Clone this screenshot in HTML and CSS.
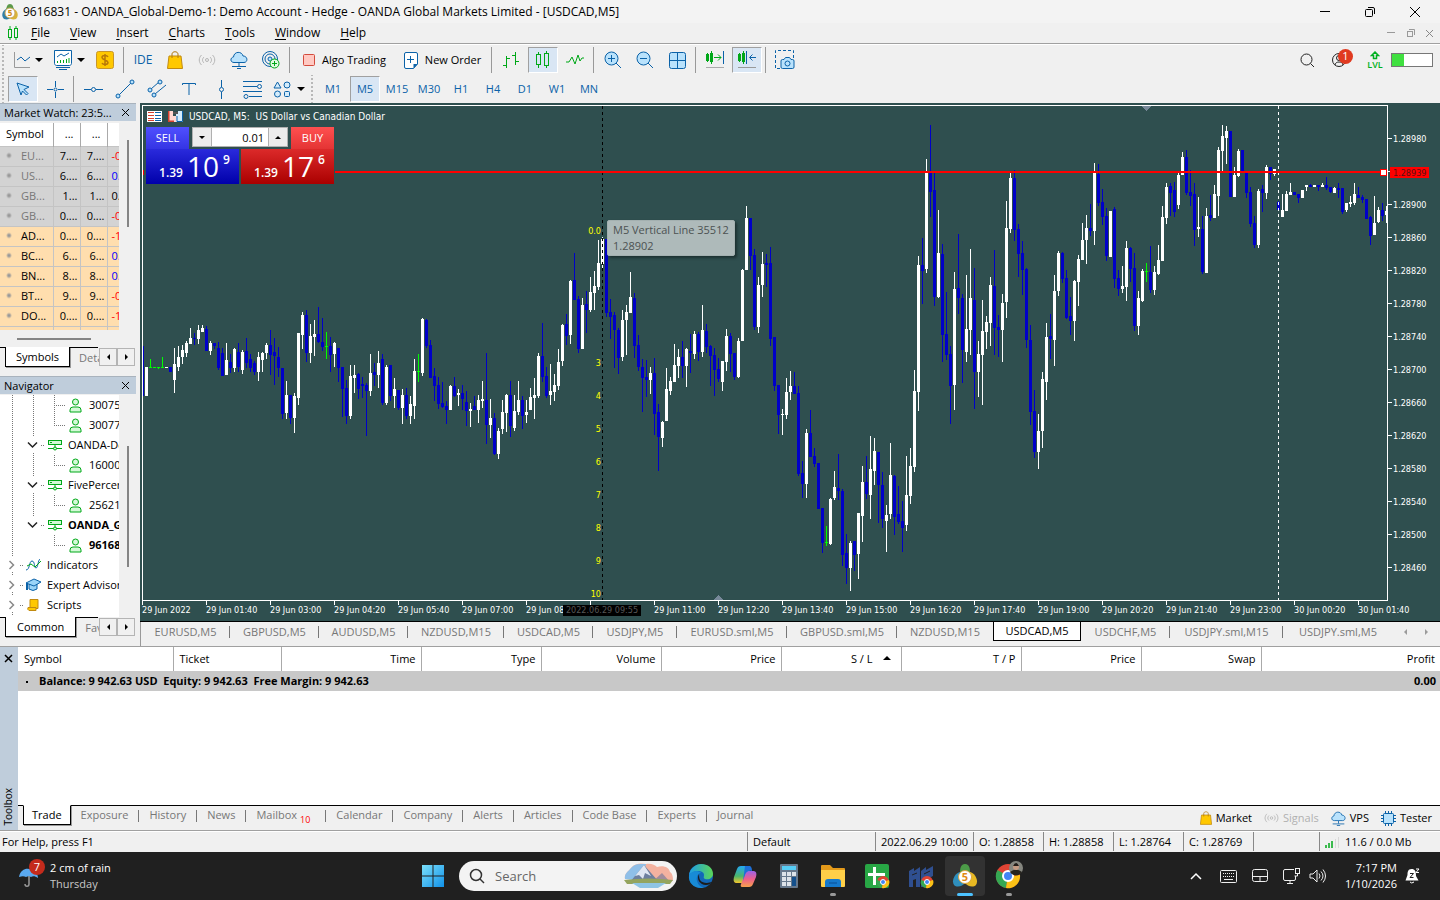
FILE: index.html
```html
<!DOCTYPE html>
<html lang="en">
<head>
<meta charset="utf-8">
<title>9616831 - OANDA_Global-Demo-1: Demo Account - Hedge - OANDA Global Markets Limited - [USDCAD,M5]</title>
<link rel="stylesheet" href="styles.css">
</head>
<body>
<header class="titlebar">
  <svg class="app-icon" width="18" height="18" viewBox="0 0 18 18"><path d="M9 1c3 0 3 3 4 5H5c1-2 1-5 4-5z" fill="#5c9a4a"/><path d="M5 6C1 8 0 13 3 16c3 1 6 0 7-2z" fill="#2f7fa8"/><path d="M13 6c4 2 5 7 2 10-3 1-6 0-8-2z" fill="#d9b33a"/><circle cx="9" cy="10" r="5" fill="#fff" stroke="#c9a65a"/><text x="9" y="13" text-anchor="middle" class="ic-five" fill="#d08a10">5</text></svg>
  <h1 class="window-title">9616831 - OANDA_Global-Demo-1: Demo Account - Hedge - OANDA Global Markets Limited - [USDCAD,M5]</h1>
  <div class="win-controls">
    <button aria-label="Minimize"><svg width="12" height="12" viewBox="0 0 12 12"><path d="M1 5.500h10" stroke="#000" fill="none"/></svg></button>
    <button aria-label="Restore"><svg width="12" height="12" viewBox="0 0 12 12" fill="none" stroke="#000"><rect x="1.500" y="3.500" width="7" height="7" rx="1"/><path d="M4 1.500h5a1.500 1.500 0 0 1 1.500 1.500v5"/></svg></button>
    <button aria-label="Close"><svg width="12" height="12" viewBox="0 0 12 12" stroke="#000"><path d="M1 1l10 10M11 1L1 11"/></svg></button>
  </div>
</header>
<nav class="menubar">
  <svg width="12" height="14" viewBox="0 0 12 14" fill="none" stroke="#00aa18"><rect x="1.500" y="3.500" width="3" height="8"/><path d="M3 0v3M3 12v2M9 0v2M9 12v2"/><rect x="7.500" y="2.500" width="3" height="9"/></svg>
  <div class="menus"><button><u>F</u>ile</button><button><u>V</u>iew</button><button><u>I</u>nsert</button><button><u>C</u>harts</button><button><u>T</u>ools</button><button><u>W</u>indow</button><button><u>H</u>elp</button></div>
  <div class="mdi-controls">
    <button aria-label="Minimize chart"><svg width="9" height="9" viewBox="0 0 9 9"><path d="M0 3.500h8" stroke="#999"/></svg></button>
    <button aria-label="Restore chart"><svg width="9" height="9" viewBox="0 0 9 9" fill="none" stroke="#999"><rect x="1.500" y="2.500" width="5" height="5"/><path d="M3 .5h5.500v5.500"/></svg></button>
    <button aria-label="Close chart"><svg width="9" height="9" viewBox="0 0 9 9" stroke="#888"><path d="M1 1l7 7M8 1L1 8"/></svg></button>
  </div>
</nav>
<section class="toolbars">
  <div class="toolbar">
    <span class="grip"></span>
    <button class="drop" aria-label="Chart type"><svg width="18" height="18" viewBox="0 0 18 18" fill="none"><path d="M1.500 1v15.500H17" stroke="#9a9a9a"/><path d="M4 9l4-3 4 4 5-4" stroke="#0b62a8"/></svg><i class="caret"></i></button>
    <button class="drop" aria-label="Templates"><svg width="20" height="20" viewBox="0 0 20 20" fill="none"><path d="M1.500.5h17v13c0 1-1 2-2 2h-13c-1 0-2-1-2-2z" fill="#fff" stroke="#0b62a8"/><path d="M3 17.500h14M6 19.500h8" stroke="#0b62a8"/><path d="M4 7l4-3 3 2 5-3" stroke="#0b62a8"/><path d="M4.500 13v-2M7.500 13v-3M10.500 13v-3M13.500 13V9M16 13V8" stroke="#00a818"/></svg><i class="caret"></i></button>
    <button class="tool" aria-label="Quotes"><svg width="18" height="18" viewBox="0 0 18 18"><rect x=".5" y=".5" width="17" height="17" rx="2" fill="#ffc800" stroke="#c8962a"/><path d="M9 3v12M12 6c-1-2-6-2-6 .5S12 9 12 11.500 7 14 6 12" fill="none" stroke="#b8780a" stroke-width="1.500"/></svg></button>
    <i class="sep"></i>
    <button class="tool ide">IDE</button>
    <button class="tool" aria-label="Market"><svg width="16" height="18" viewBox="0 0 16 18"><path d="M2 5h12l1.500 12.500H.5z" fill="#ffc800" stroke="#c18a10"/><path d="M5 7V3c0-3 6-3 6 0v4" fill="none" stroke="#b07a10"/></svg></button>
    <button class="tool" aria-label="Signals"><svg width="18" height="14" viewBox="0 0 18 14" fill="none" stroke="#b5b5b5"><circle cx="9" cy="7" r="1.500"/><path d="M6 4c-2 2-2 4 0 6M12 4c2 2 2 4 0 6M3.500 2c-3 3-3 7 0 10M14.500 2c3 3 3 7 0 10"/></svg></button>
    <button class="tool" aria-label="VPS"><svg width="18" height="18" viewBox="0 0 18 18"><path d="M4 11.500c-4 0-4-5-.5-5.500C4 0 12 0 13 5c5 0 5 6.500 1 6.500z" fill="#b9e2fc" stroke="#0b62a8"/><path d="M9 12v3M2 15.500h14M7 17.500h4" stroke="#0b62a8"/></svg></button>
    <button class="tool" aria-label="Radar"><svg width="18" height="18" viewBox="0 0 18 18" fill="none"><g stroke="#0b62a8"><circle cx="8" cy="8" r="7.500"/><circle cx="8" cy="8" r="5"/><circle cx="8" cy="8" r="2" fill="#b9e2fc"/></g><circle cx="12.500" cy="12.500" r="4.500" fill="#e2fbe2" stroke="#00a818"/><path d="M12.500 10v5M10 12.500h5" stroke="#00a818"/></svg></button>
    <i class="sep"></i>
    <button class="wide algo"><svg width="12" height="12" viewBox="0 0 12 12"><rect x=".5" y=".5" width="11" height="11" rx="1" fill="#ffc9c2" stroke="#d34b3c"/></svg>Algo Trading</button>
    <button class="wide order"><svg width="14" height="17" viewBox="0 0 14 17"><path d="M.5 2q0-1.500 1.500-1.500h10q1.500 0 1.500 1.500v10l-4 4.500H2Q.5 16.500.5 15z" fill="#fff" stroke="#0b62a8"/><path d="M13.500 12l-4 4.500V12z" fill="#0b62a8"/><path d="M6.500 4v7M3 7.500h7" stroke="#0b62a8"/></svg>New Order</button>
    <i class="sep"></i>
    <button class="tool" aria-label="Bar chart"><svg width="18" height="18" viewBox="0 0 18 18"><path d="M1 14.500h3.500M4.500 5v12M4.500 7.500H8M10 4.500h3.500M13.500 1v13M13.500 10.500H17" stroke="#00a818" fill="none"/></svg></button>
    <button class="tool on" aria-label="Candles"><svg width="16" height="18" viewBox="0 0 16 18" fill="none" stroke="#00a818"><rect x="1.500" y="3.500" width="4" height="10"/><path d="M3.500 1v2M3.500 14v3M11.500 0v2M11.500 15v2"/><rect x="9.500" y="2.500" width="4" height="12"/></svg></button>
    <button class="tool" aria-label="Line chart"><svg width="18" height="14" viewBox="0 0 18 14"><path d="M0 9h3l3-5 3 7 3-9 2 6 2-3h2" stroke="#00a818" fill="none"/></svg></button>
    <i class="sep"></i>
    <button class="tool" aria-label="Zoom in"><svg width="18" height="18" viewBox="0 0 18 18"><circle cx="7.500" cy="7.500" r="6.500" fill="#b9e2fc" stroke="#0b62a8"/><path d="M4 7.500h7M7.500 4v7M12 12l5 5" stroke="#0b62a8"/></svg></button>
    <button class="tool" aria-label="Zoom out"><svg width="18" height="18" viewBox="0 0 18 18"><circle cx="7.500" cy="7.500" r="6.500" fill="#b9e2fc" stroke="#0b62a8"/><path d="M4 7.500h7M12 12l5 5" stroke="#0b62a8"/></svg></button>
    <button class="tool" aria-label="Tile windows"><svg width="17" height="17" viewBox="0 0 17 17"><rect x=".5" y=".5" width="16" height="16" rx="2" fill="#b9e2fc" stroke="#0b62a8"/><path d="M8.500 1v15M1 8.500h15" stroke="#0b62a8"/></svg></button>
    <i class="sep"></i>
    <button class="tool" aria-label="Scroll to end"><svg width="20" height="18" viewBox="0 0 20 18" fill="none"><g stroke="#00a818"><rect x="1.500" y="3.500" width="2" height="6"/><rect x="5.500" y="2.500" width="2" height="8"/><path d="M2.500 2v9M6.500 0v13M9 6.500h7M13 3.500l3 3-3 3"/></g><path d="M18.500 0v13" stroke="#0b62a8"/><path d="M1 16.500h18" stroke="#aaa"/></svg></button>
    <button class="tool on" aria-label="Chart shift"><svg width="20" height="18" viewBox="0 0 20 18" fill="none"><g stroke="#00a818"><rect x="1.500" y="3.500" width="2" height="6"/><rect x="5.500" y="2.500" width="2" height="8"/><path d="M2.500 2v9M6.500 0v13"/></g><path d="M9.500 0v13M19 6.500h-6M15.500 3.500l-3 3 3 3" stroke="#0b62a8"/><path d="M1 16.500h18" stroke="#999"/></svg></button>
    <i class="sep"></i>
    <button class="tool" aria-label="Screenshot"><svg width="20" height="20" viewBox="0 0 20 20" fill="none" stroke="#0b62a8"><path d="M5 18.500H.5V.5h18V8" stroke-dasharray="3 2"/><path d="M6 11q0-1.500 1.500-1.500h1.500l1.500-2h4l1.500 2h1.500q1.500 0 1.500 1.500v6q0 1.500-1.500 1.500h-10Q6 18.500 6 17z" fill="#b9e2fc"/><circle cx="12.500" cy="13.500" r="2.500"/></svg></button>
    <div class="toolbar-right">
      <button aria-label="Search"><svg width="15" height="15" viewBox="0 0 15 15" fill="none" stroke="#222"><circle cx="6.500" cy="6.500" r="5.500"/><path d="M10.500 10.500L14 14"/></svg></button>
      <button class="profile" aria-label="Profile"><svg width="14" height="14" viewBox="0 0 14 14" fill="none" stroke="#222"><circle cx="7" cy="7" r="6.500"/><circle cx="7" cy="5" r="2.500"/><path d="M3 12c0-4 8-4 8 0"/></svg><span class="badge">1</span></button>
      <button class="lvl" aria-label="Level"><svg width="10" height="9" viewBox="0 0 10 9" fill="none" stroke="#00b020" stroke-width="1.500"><path d="M5 1L1.500 4.500h2v3h3v-3h2z"/></svg><span>LVL</span></button>
      <span class="meter"><i></i></span>
    </div>
  </div>
  <div class="toolbar second">
    <span class="grip"></span>
    <button class="tool on" aria-label="Cursor"><svg width="16" height="16" viewBox="0 0 16 16"><path d="M2 2l12 4-5 2.500 4 4-1.500 1.500-4-4L6 14z" fill="#b9e2fc" stroke="#0b62a8"/></svg></button>
    <button class="tool" aria-label="Crosshair"><svg width="17" height="17" viewBox="0 0 17 17" fill="none" stroke="#0b62a8"><path d="M8.500 0v6M8.500 11v6M0 8.500h6M11 8.500h6"/><circle cx="8.500" cy="8.500" r="1.500"/></svg></button>
    <i class="sep"></i>
    <button class="tool" aria-label="Horizontal line"><svg width="19" height="9" viewBox="0 0 19 9" fill="none" stroke="#0b62a8"><path d="M0 4.500h7M12 4.500h7"/><circle cx="9.500" cy="4.500" r="2"/></svg></button>
    <button class="tool" aria-label="Trend line"><svg width="20" height="20" viewBox="0 0 20 20" stroke="#0b62a8"><path d="M4 16L16 4"/><g fill="#b9e2fc"><circle cx="3" cy="17" r="2"/><circle cx="17" cy="3" r="2"/></g></svg></button>
    <button class="tool" aria-label="Channel"><svg width="20" height="20" viewBox="0 0 20 20" stroke="#0b62a8"><path d="M4 10l8-7M8 15L19 6"/><g fill="#b9e2fc"><circle cx="3" cy="11" r="2"/><circle cx="13" cy="3" r="2"/><circle cx="7" cy="16" r="2"/></g></svg></button>
    <button class="tool" aria-label="Text"><svg width="14" height="14" viewBox="0 0 14 14"><path d="M.5 3V1.500h13V3M7 1.500V13" stroke="#0b62a8" fill="none"/></svg></button>
    <button class="tool" aria-label="Vertical line"><svg width="9" height="19" viewBox="0 0 9 19" fill="none" stroke="#0b62a8"><path d="M4.500 0v7M4.500 12v7"/><circle cx="4.500" cy="9.500" r="2"/></svg></button>
    <button class="tool" aria-label="Fibonacci"><svg width="20" height="19" viewBox="0 0 20 19" fill="none" stroke="#0b62a8"><path d="M0 1.500h19M0 6.500h14M0 11.500h19M6 16.500h13"/><circle cx="16.500" cy="6.500" r="2"/><circle cx="3" cy="16.500" r="2"/></svg></button>
    <button class="drop shapes" aria-label="Objects"><svg width="19" height="19" viewBox="0 0 19 19" fill="#d5ecfb" stroke="#0b62a8"><path d="M4.500 2L8 8H1z"/><circle cx="14" cy="5" r="3"/><circle cx="4.500" cy="14" r="3"/><rect x="11.500" y="11.500" width="5" height="5" rx="1"/></svg><i class="caret"></i></button>
    <span class="grip mid"></span>
    <button class="tool tf">M1</button><button class="tool tf on">M5</button><button class="tool tf">M15</button><button class="tool tf">M30</button><button class="tool tf">H1</button><button class="tool tf">H4</button><button class="tool tf">D1</button><button class="tool tf">W1</button><button class="tool tf">MN</button>
  </div>
</section>
<main class="workspace">
  <aside class="sidebar">
    <section class="pane watch">
      <h2 class="pane-head">Market Watch: 23:5...<button aria-label="Close Market Watch"><svg width="9" height="9" viewBox="0 0 9 9" stroke="#000"><path d="M1 1l7 7M8 1L1 8"/></svg></button></h2>
      <div class="watch-body">
        <div class="watch-clip">
          <table class="quotes">
            <colgroup><col class="c-sym"><col class="c-num"><col class="c-num"><col class="c-num"></colgroup>
            <thead><tr><th>Symbol</th><th>...</th><th>...</th><th></th></tr></thead>
            <tbody>
              <tr class="off"><td>EU...</td><td>7....</td><td>7....</td><td class="neg">-0.</td></tr>
              <tr class="off"><td>US...</td><td>6....</td><td>6....</td><td class="pos">0.1</td></tr>
              <tr class="off"><td>GB...</td><td>1...</td><td>1...</td><td>0.0</td></tr>
              <tr class="off"><td>GB...</td><td>0....</td><td>0....</td><td class="neg">-0.</td></tr>
              <tr><td>AD...</td><td>0....</td><td>0....</td><td class="neg">-1.</td></tr>
              <tr><td>BC...</td><td>6...</td><td>6...</td><td class="pos">0.1</td></tr>
              <tr><td>BN...</td><td>8...</td><td>8...</td><td class="pos">0.1</td></tr>
              <tr><td>BT...</td><td>9...</td><td>9...</td><td class="neg">-0.</td></tr>
              <tr><td>DO...</td><td>0....</td><td>0....</td><td class="neg">-1.</td></tr>
              <tr><td></td><td></td><td></td><td></td></tr>
            </tbody>
          </table>
        </div>
        <i class="vthumb"></i>
      </div>
      <i class="hthumb"></i>
      <div class="side-tabs"><button class="tab-on">Symbols</button><button class="tab-off">Details</button><span class="arrows"><button aria-label="Previous tab"><i class="tri-l"></i></button><button aria-label="Next tab"><i class="tri-r"></i></button></span></div>
    </section>
    <section class="pane">
      <h2 class="pane-head">Navigator<button aria-label="Close Navigator"><svg width="9" height="9" viewBox="0 0 9 9" stroke="#000"><path d="M1 1l7 7M8 1L1 8"/></svg></button></h2>
      <div class="nav-body">
        <div class="tree" id="tree">
          <svg class="tree-lines" width="70" height="220" viewBox="0 0 70 220" fill="none" stroke="#777" stroke-dasharray="1 1"><path d="M12.500 0v161M12.500 177v3M12.500 197v3M12.500 217v3M33.500 0v42M33.500 58v24M33.500 98v24M54.500 0v30M54 10.500h11M54 30.500h11M41 50.500h4M54.500 60v10M54 70.500h11M41 90.500h4M54.500 100v10M54 110.500h11M41 130.500h4M54.500 140v10M54 150.500h11M20 170.500h3M20 190.500h3M20 210.500h3"/></svg>
        </div>
        <i class="vthumb low"></i>
      </div>
      <div class="side-tabs nav-tabs"><button class="tab-on">Common</button><button class="tab-off">Favorites</button><span class="arrows"><button aria-label="Previous tab"><i class="tri-l"></i></button><button aria-label="Next tab"><i class="tri-r"></i></button></span></div>
    </section>
  </aside>
  <section class="chart-col">
    <div class="chart">
      <svg id="plot" class="plot" viewBox="140 103 1300 518"></svg>
      <div class="chart-title">
        <svg width="15" height="11" viewBox="0 0 15 11"><rect width="15" height="11" fill="#fff"/><path d="M1 1.500h6M1 4.500h6M1 7.500h6M1 9.500h6" stroke="#d5402e"/><path d="M8 1.500h6M8 4.500h6M8 7.500h6M8 9.500h6" stroke="#0b62a8"/></svg>
        <svg width="15" height="11" viewBox="0 0 15 11"><path d="M0 0h5v5h5v6H0z" fill="#ffd9d2"/><path d="M.5 0v10.500H6" fill="none" stroke="#d5402e" stroke-width="2"/><path d="M15 0h-5v3H8v8h7z" fill="#d4ecfb"/><path d="M14.500 0v10.500H9V5" fill="none" stroke="#0b62a8"/><rect x="5" y="1" width="5" height="2" fill="#555"/></svg>
        <span>USDCAD, M5:&nbsp; US Dollar vs Canadian Dollar</span>
      </div>
      <div class="deal">
        <button class="deal-btn sell"><span class="side">SELL</span><span class="price"><b>1.39</b><em>10</em><sup>9</sup></span></button>
        <button class="deal-btn buy"><span class="side">BUY</span><span class="price"><b>1.39</b><em>17</em><sup>6</sup></span></button>
        <div class="volume"><button aria-label="Decrease volume"><i class="tri-d"></i></button><input aria-label="Volume" value="0.01"><button aria-label="Increase volume"><i class="tri-u"></i></button></div>
      </div>
      <div class="tooltip">M5 Vertical Line 35512<br>1.28902</div>
    </div>
    <nav class="chart-tabs">
      <button>EURUSD,M5</button><button>GBPUSD,M5</button><button>AUDUSD,M5</button><button class="m15">NZDUSD,M15</button><button>USDCAD,M5</button><button class="narrow">USDJPY,M5</button><button class="sml">EURUSD.sml,M5</button><button class="sml">GBPUSD.sml,M5</button><button class="m15 last">NZDUSD,M15</button><button class="current">USDCAD,M5</button><button>USDCHF,M5</button><button class="sml15">USDJPY.sml,M15</button><button class="sml last">USDJPY.sml,M5</button>
      <span class="tab-scroll"><i class="tri-l"></i><i class="tri-r"></i></span>
    </nav>
  </section>
</main>
<section class="toolbox">
  <div class="strip"><button aria-label="Close Toolbox"><svg width="9" height="9" viewBox="0 0 9 9" stroke="#000" stroke-width="1.500"><path d="M1 1l7 7M8 1L1 8"/></svg></button><span>Toolbox</span></div>
  <div class="toolbox-main">
    <div class="trade-area">
      <table class="trade">
        <colgroup><col class="w155"><col class="w108"><col class="w140"><col class="w120"><col class="w120"><col class="w120"><col class="w120"><col class="w120"><col class="w120"><col class="w120"><col></colgroup>
        <thead><tr><th>Symbol</th><th>Ticket</th><th>Time</th><th>Type</th><th>Volume</th><th>Price</th><th>S / L<i class="tri-u sort"></i></th><th>T / P</th><th>Price</th><th>Swap</th><th>Profit</th></tr></thead>
        <tbody><tr><td colspan="10"><i class="dot"></i>Balance: 9 942.63 USD&nbsp; Equity: 9 942.63&nbsp; Free Margin: 9 942.63</td><td>0.00</td></tr></tbody>
      </table>
    </div>
    <div class="box-tabs">
      <button class="tab-on">Trade</button><button>Exposure</button><button>History</button><button>News</button><button class="mail">Mailbox<small>10</small></button><button>Calendar</button><button>Company</button><button>Alerts</button><button>Articles</button><button>Code Base</button><button>Experts</button><button>Journal</button>
      <div class="services">
        <button><svg width="12" height="14" viewBox="0 0 16 18"><path d="M2 5h12l1.500 12.500H.5z" fill="#ffc800" stroke="#c18a10"/><path d="M5 7V3c0-3 6-3 6 0v4" fill="none" stroke="#b07a10"/></svg>Market</button>
        <button class="dim"><svg width="15" height="12" viewBox="0 0 18 14" fill="none" stroke="#b5b5b5"><circle cx="9" cy="7" r="1.500"/><path d="M6 4c-2 2-2 4 0 6M12 4c2 2 2 4 0 6M3.500 2c-3 3-3 7 0 10M14.500 2c3 3 3 7 0 10"/></svg>Signals</button>
        <button><svg width="15" height="15" viewBox="0 0 18 18"><path d="M4 11.500c-4 0-4-5-.5-5.500C4 0 12 0 13 5c5 0 5 6.500 1 6.500z" fill="#b9e2fc" stroke="#0b62a8"/><path d="M9 12v3M2 15.500h14M7 17.500h4" stroke="#0b62a8"/></svg>VPS</button>
        <button><svg width="15" height="15" viewBox="0 0 15 15" stroke="#0b62a8"><path d="M4.500 0v15M7.500 0v15M10.500 0v15M0 4.500h15M0 7.500h15M0 10.500h15"/><rect x="2.500" y="2.500" width="10" height="10" rx="1" fill="#b9e2fc"/></svg>Tester</button>
      </div>
    </div>
  </div>
</section>
<footer class="status">
  <span class="help">For Help, press F1</span><span class="s-profile">Default</span><span class="s-date">2022.06.29 10:00</span><span class="s-val">O: 1.28858</span><span class="s-val">H: 1.28858</span><span class="s-val">L: 1.28764</span><span class="s-val">C: 1.28769</span><span class="s-gap"></span><span class="s-net"><svg width="14" height="12" viewBox="0 0 14 12"><path d="M1 12V9M4 12V7M7 12V5" stroke="#00a818" stroke-width="1.500"/><path d="M10.500 12V3M13.500 12V1" stroke="#d8d8d8"/></svg>11.6 / 0.0 Mb</span>
</footer>
<footer class="taskbar">
  <button class="weather"><span class="umbrella"><svg width="24" height="24" viewBox="0 0 24 24"><path d="M1 13C2 6 8 4 11 5c5 0 9 4 9 9-3-2-5-2-7-1-2-1-3-1-5 0-2-1-4-1-7 0z" fill="#5aa9f0"/><path d="M11 12v8c0 3-4 3-4 0" stroke="#999" stroke-width="1.500" fill="none"/></svg><b>7</b></span><span class="weather-text">2 cm of rain<small>Thursday</small></span></button>
  <div class="apps">
    <button class="app" aria-label="Start"><svg width="24" height="24" viewBox="0 0 24 24"><defs><linearGradient id="win" x2="1" y2="1"><stop stop-color="#7be0fb"/><stop offset="1" stop-color="#1191e8"/></linearGradient></defs><path d="M1 1h10.500v10.500H1zM12.500 1H23v10.500H12.500zM1 12.500h10.500V23H1zM12.500 12.500H23V23H12.500z" fill="url(#win)"/></svg></button>
    <label class="search"><svg width="16" height="16" viewBox="0 0 16 16" fill="none" stroke="#333" stroke-width="1.500"><circle cx="7" cy="7" r="5.500"/><path d="M11 11l4 4"/></svg><input placeholder="Search" aria-label="Search"><svg width="50" height="26" viewBox="0 0 50 26"><path d="M1 16C0 10 5 8 7 5c4-5 10-5 15-4 5-1 9 1 11 3 6-2 12 0 13 5 3 2 3 6 3 9z" fill="#f3b2a0"/><path d="M1 16C0 10 5 8 7 5c4-5 10-4 15-4l-4 17z" fill="#8fbfe8"/><path d="M6 19L20 2l15 17z" fill="#6d7f9e"/><path d="M20 2l-9 11 4-1 4 4 2-6 6 3z" fill="#dfe6f2"/><path d="M28 19l10-9 8 9z" fill="#a08c9c"/><path d="M0 17q25-3 49 0l-3 4H3z" fill="#94a45e"/><path d="M8 20h34l-8 5H16z" fill="#8ec4e4"/></svg></label>
    <button class="app" aria-label="Edge"><svg width="26" height="26" viewBox="0 0 26 26"><defs><linearGradient id="edge" x2="1"><stop stop-color="#1e9de8"/><stop offset="1" stop-color="#5bd657"/></linearGradient></defs><circle cx="13" cy="13" r="12" fill="#1267b8"/><path d="M1 12C2 5 8 1 13 1c7 0 12 4 12 10 0 4-4 6-8 5-2-1-1-2-1-4 0-3-3-4-6-4-4 0-7 2-9 4z" fill="url(#edge)"/><path d="M11 11c-3 5 1 11 7 11 3 0 5-2 6-3-3 1-9 2-12-2-1-2-1-4-1-6z" fill="#1c1c1c"/><path d="M1 12c4-6 11-4 12-2-3 0-5 4-4 8 1 4 4 6 7 7C6 26 0 20 1 12z" fill="#188bd6"/></svg></button>
    <button class="app" aria-label="Copilot"><svg width="24" height="24" viewBox="0 0 24 24"><defs><linearGradient id="co1" y2="1" x2="0"><stop stop-color="#24a8f4"/><stop offset=".6" stop-color="#4bb66b"/><stop offset="1" stop-color="#f5c52b"/></linearGradient><linearGradient id="co2" y2="1" x2="0"><stop stop-color="#9b62e8"/><stop offset=".5" stop-color="#ed5f8c"/><stop offset="1" stop-color="#f6a14b"/></linearGradient></defs><path d="M8 2h8q2 0 1 3l-4 11q-1 3-4 3H4c-3 0-4-2-3-6l3-8q1-3 4-3z" fill="url(#co1)"/><path d="M16 7h4c3 0 4 2 3 6l-3 7q-1 3-4 3H9q-2 0-1-3l4-10q1-3 4-3z" fill="url(#co2)"/><path d="M12 2h4q3 0 3 5c-4-1-6 1-7 4l-2 6z" fill="#1d6fd8"/></svg></button>
    <button class="app" aria-label="Calculator"><svg width="20" height="26" viewBox="0 0 20 26"><rect x="1" y="1" width="18" height="24" rx="1" fill="#66788c"/><rect x="3" y="3" width="14" height="4" fill="#56cdf6"/><g fill="#dde3e9"><path d="M3 9h4v4H3zM8 9h4v4H8zM13 9h4v4h-4zM3 14h4v4H3zM8 14h4v4H8zM3 19h4v4H3zM8 19h4v4H8z"/></g><path d="M13 14h4v9h-4z" fill="#14508c"/></svg></button>
    <button class="app dotted" aria-label="Explorer"><svg width="26" height="24" viewBox="0 0 26 24"><path d="M1 2q0-1 1-1h8l3 3h11q1 0 1 1v17H1z" fill="#e49a1a"/><path d="M1 6h24v16q0 1-1 1H2q-1 0-1-1z" fill="#ffcf48"/><path d="M5 23v-5q0-3 3-3h10q3 0 3 3v5z" fill="#1579cc"/><path d="M9 19h8" stroke="#0b4f94"/></svg></button>
    <button class="app" aria-label="Sheets"><svg width="26" height="26" viewBox="0 0 26 26"><rect x="1" y="1" width="24" height="24" rx="2" fill="#28a745"/><path d="M9 4h3v6h9v3h-9v9H9v-9H4v-3h5z" fill="#fff"/><circle cx="19" cy="19" r="6" fill="#e04434"/><path d="M19 19L13 17a6 6 0 0 0 5 8z" fill="#35a853"/><path d="M19 19l6-2a6 6 0 0 1-7 8z" fill="#fbc116"/><circle cx="19" cy="19" r="2.500" fill="#4285f4" stroke="#fff"/></svg></button>
    <button class="app" aria-label="Factory app"><svg width="26" height="26" viewBox="0 0 26 26"><path d="M1 8l5-3v3l6-4v20H8v-8l-3 1v7H1zM13 8l5-4v3l7-4v10l-6 3v8h-6z" fill="#2f4f90"/><path d="M4 12l5-2M16 11l6-3" stroke="#202020"/><circle cx="19" cy="19" r="6" fill="#e04434"/><path d="M19 19L13 17a6 6 0 0 0 5 8z" fill="#35a853"/><path d="M19 19l6-2a6 6 0 0 1-7 8z" fill="#fbc116"/><circle cx="19" cy="19" r="2.500" fill="#4285f4" stroke="#fff"/></svg></button>
    <button class="app active" aria-label="MetaTrader 5"><svg width="26" height="26" viewBox="0 0 26 26"><path d="M13 1c5 0 5 6 5 9H8c0-3 0-9 5-9z" fill="#4c9b48"/><path d="M8 9c-5 1-9 9-6 13 3 3 9 1 11-2z" fill="#2f8fbd"/><path d="M18 9c5 1 9 9 6 13-3 3-9 1-11-2z" fill="#e8b923"/><circle cx="13" cy="14" r="6.500" fill="#fff" stroke="#d9a441"/><text x="13" y="18" text-anchor="middle" class="ic-five big" fill="#e28a12">5</text></svg></button>
    <button class="app dotted" aria-label="Chrome"><svg width="28" height="30" viewBox="0 0 28 30"><circle cx="13" cy="15" r="12" fill="#e04434"/><path d="M13 15L2.500 9A12 12 0 0 0 11 27z" fill="#35a853"/><path d="M13 15l12-1a12 12 0 0 1-14 13z" fill="#fbc116"/><circle cx="13" cy="15" r="5" fill="#4285f4" stroke="#fff" stroke-width="2"/><circle cx="21" cy="7" r="7" fill="#85867f"/><path d="M15 11q6-5 12 0c-2 4-9 5-12 0z" fill="#26241f"/><circle cx="21" cy="6" r="3" fill="#c49a82"/><path d="M18 5q3-6 6 0z" fill="#221c18"/></svg></button>
  </div>
  <div class="tray">
    <button aria-label="Hidden icons"><svg width="12" height="8" viewBox="0 0 12 8" fill="none" stroke="#fff" stroke-width="1.500"><path d="M1 7l5-5 5 5"/></svg></button>
    <button aria-label="Keyboard"><svg width="17" height="13" viewBox="0 0 17 13" fill="none" stroke="#eee"><rect x=".5" y=".5" width="16" height="12" rx="1"/><path d="M3 3.500h11M3 6.500h11" stroke-dasharray="1 1"/><path d="M4 9.500h9"/></svg></button>
    <button aria-label="Touchpad"><svg width="16" height="14" viewBox="0 0 16 14" fill="none" stroke="#eee"><rect x=".5" y=".5" width="15" height="12" rx="2"/><path d="M0 7.500h16M8 8v5"/></svg></button>
    <button aria-label="Network"><svg width="18" height="18" viewBox="0 0 18 18" fill="none" stroke="#eee"><path d="M11 2.500H2Q.5 2.500.5 4v8q0 1.500 1.500 1.500h9q1.500 0 1.500-1.500V9M4 16.500h6M7 14v2"/><rect x="12.500" y="1.500" width="4" height="5"/><path d="M14.500 7v2h-3"/></svg></button>
    <button class="sound" aria-label="Sound"><svg width="17" height="16" viewBox="0 0 17 16" fill="none" stroke="#eee"><path d="M1 6v4h3l4 4V2L4 6zM10 5.500q2 2.500 0 5M12 3.500q4 4.500 0 9M14 1.500q5 6.500 0 13"/></svg></button>
    <time>7:17 PM<br>1/10/2026</time>
    <button aria-label="Notifications"><svg width="15" height="17" viewBox="0 0 15 17"><path d="M6.500 1C3 1 2.500 4 2.500 7L.5 12.500h13L11 8C11 3 10 1 6.500 1z" fill="#fff"/><path d="M5 14q1.500 2 4 0" stroke="#fff" fill="none"/><path d="M5 5.500h3.500L5 9.500h3.500" stroke="#202020" fill="none"/><path d="M11 1h3l-3 3.500h3" stroke="#fff" fill="none"/></svg></button>
  </div>
</footer>
<script src="app.js"></script>
</body>
</html>
```
FILE: styles.css
```css
* { box-sizing: border-box; }
body { margin: 0; min-height: 100vh; display: flex; flex-direction: column; background: #f0f0f0; color: #000; font: 11px/16px "Open Sans", "Noto Sans", sans-serif; overflow-x: hidden; }
button { margin: 0; padding: 0; border: 0; background: none; color: inherit; font: inherit; display: inline-flex; align-items: center; justify-content: center; white-space: nowrap; }
h1, h2 { margin: 0; font: inherit; }
svg { display: block; flex: none; }
i { display: block; flex: none; }

.titlebar { display: flex; align-items: center; height: 23px; padding-left: 1px; background: #f3f3f3; }
.window-title { margin-left: 4px; flex: 1; font-size: 12px; white-space: nowrap; overflow: hidden; }
.ic-five { font: bold 8px "Open Sans", sans-serif; }
.ic-five.big { font-size: 11px; }
.win-controls { display: flex; padding-right: 3px; }
.win-controls button { width: 45px; height: 20px; }

.menubar { display: flex; align-items: center; height: 21px; padding-left: 7px; border-bottom: 1px solid #a0a0a0; }
.menus { display: flex; gap: 20px; margin-left: 12px; font-size: 12px; }
.menus u { text-underline-offset: 2px; }
.mdi-controls { display: flex; margin-left: auto; padding-right: 1px; }
.mdi-controls button { width: 19px; height: 16px; }

.toolbars { border-top: 1px solid #fff; }
.toolbar { display: flex; align-items: center; height: 30px; }
.toolbar.second { height: 28px; }
.grip { width: 7px; align-self: stretch; flex: none; background: radial-gradient(circle, #b8b8b8 1px, transparent 1px) 1px 2px / 4px 4px repeat-y; }
.grip.mid { width: 8px; }
.tool { width: 32px; height: 28px; flex: none; }
.tool.on { width: 30px; margin: 0 1px; height: 26px; background: #d9e6f4; border: 1px solid; border-color: #a0a0a0 #fff #fff #a0a0a0; }
.tool.tf, .tool.ide { color: #0b62a8; }
.tool.ide { font-size: 12px; }
.drop { width: 41px; gap: 4px; }
.shapes { width: 40px; gap: 5px; }
.caret { border: 4px solid transparent; border-top-color: #000; border-bottom: 0; }
.sep { width: 1px; height: 26px; margin: 0 3px 0 2px; background: #999; }
.wide { gap: 7px; flex: none; }
.algo { width: 103px; }
.order { width: 93px; }
.toolbar-right { display: flex; align-items: center; margin-left: auto; padding-right: 7px; }
.toolbar-right > button { width: 32px; height: 28px; }
.toolbar-right .profile { position: relative; }
.badge { position: absolute; right: 2px; top: 3px; width: 15px; height: 15px; border-radius: 8px; background: #e03a20; color: #fff; line-height: 14px; }
.toolbar-right .lvl { flex-direction: column; margin-left: 4px; color: #00b020; font-size: 9px; font-weight: 600; line-height: 9px; }
.meter { width: 42px; height: 14px; border: 1px solid #777; background: #fff; }
.meter i { width: 12px; height: 12px; background: #40e040; }

.workspace { display: flex; border-bottom: 1px solid #a0a0a0; }
.sidebar { width: 140px; flex: none; padding-right: 4px; }
.pane { display: flex; flex-direction: column; }
.watch { margin-bottom: 8px; }
.pane-head { display: flex; align-items: center; justify-content: space-between; height: 18px; padding: 0 6px 0 4px; border-top: 1px solid #a9b3bd; background: #bfcddb; white-space: nowrap; }
.watch-body { display: flex; height: 209px; padding-top: 2px; }
.watch-clip { width: 119px; overflow: hidden; background: #fff; }
.quotes { width: 134px; table-layout: fixed; border-collapse: collapse; }
.c-sym { width: 53px; }
.c-num { width: 27px; }
.quotes th { height: 23px; padding: 0 6px; border-right: 1px solid #aaa; background: #fff; font-weight: normal; text-align: left; }
.quotes th + th { text-align: right; }
.quotes td { height: 20px; padding: 0 2px; border: 1px solid #c4c4c4; border-left: 0; background: #ffdeae; text-align: right; line-height: 14px; white-space: nowrap; overflow: hidden; }
.quotes td:first-child { padding-left: 21px; text-align: left; background-image: radial-gradient(circle at 9px 9px, #999 1px, transparent 3px); }
.quotes td:last-child { padding-left: 4px; text-align: left; }
.quotes .off td { background-color: #d3d3d3; }
.quotes .off td:first-child { color: #777; }
.quotes td.neg { color: #f00; }
.quotes td.pos { color: #00f; }
.vthumb { width: 2px; height: 87px; margin: 17px 0 0 8px; background: #858585; }
.vthumb.low { height: 121px; margin-top: 51px; }
.hthumb { width: 74px; height: 2px; margin: 8px 0 7px 17px; background: #858585; }
.side-tabs { display: flex; height: 21px; position: relative; background: linear-gradient(#000, #000) 0 0 / 98px 1px no-repeat; padding-left: 5px; overflow: hidden; }
.tab-on { background: #fff; border: 1px solid #000; border-top: 0; box-shadow: 1px 1px 0 #999; }
.side-tabs .tab-on { height: 20px; padding: 0 10px; }
.nav-tabs .tab-on { padding: 0 11px; }
.tab-off { color: #777; padding: 0 9px; }
.arrows { display: flex; position: absolute; right: 1px; top: 1px; background: #f0f0f0; }
.arrows button { width: 18px; height: 18px; border: 1px solid #b4b4b4; }
.tri-l { border: 3px solid transparent; border-left: 0; border-right-color: #000; }
.tri-r { border: 3px solid transparent; border-right: 0; border-left-color: #000; }
.tri-d { border: 3px solid transparent; border-bottom: 0; border-top-color: #000; }
.tri-u { border: 3px solid transparent; border-top: 0; border-bottom-color: #000; }
.nav-body { display: flex; padding-top: 1px; }
.tree { position: relative; width: 119px; height: 222px; background: #fff; overflow: hidden; }
.tree-lines { position: absolute; left: 0; top: 0; }
.node { display: flex; align-items: center; height: 20px; position: relative; white-space: nowrap; }
.node .chev { width: 11px; }
.lv1 { padding-left: 6px; }
.lv1 span { margin-left: 5px; }
.lv1 .pic { margin-left: 8px; }
.lv2 { padding-left: 27px; }
.lv2 span { margin-left: 6px; }
.lv2 .pic { margin-left: 10px; }
.lv3 { padding-left: 69px; }
.lv3 span { margin-left: 7px; }
.node.bold { font-weight: bold; }

.chart-col { flex: 1; min-width: 0; }
.chart { position: relative; background: #2f4f4f; border-bottom: 1px solid #000; }
.plot { width: 100%; height: auto; shape-rendering: crispEdges; }
.plot text { font: 9px "DejaVu Sans Condensed", "DejaVu Sans", sans-serif; fill: #fff; }
.plot .level { fill: #ff0; }
.plot .dark { fill: #565656; }
.plot .onred { fill: #5a1010; }
.chart-title { position: absolute; left: 7px; top: 7px; display: flex; align-items: center; gap: 6px; height: 13px; color: #fff; font: 10px "DejaVu Sans Condensed", "DejaVu Sans", sans-serif; white-space: nowrap; }
.deal { position: absolute; left: 6px; top: 24px; display: flex; gap: 2px; color: #fff; }
.deal-btn { flex-direction: column; justify-content: flex-start; align-items: flex-start; width: 93px; height: 57px; }
.deal-btn .side { width: 43px; height: 22px; line-height: 22px; }
.deal-btn .price { display: flex; justify-content: center; align-items: baseline; gap: 4px; width: 93px; height: 35px; padding-left: 4px; line-height: 35px; }
.sell .side { background: linear-gradient(#5050ff, #3434e4); }
.sell .price { background: linear-gradient(#2a2adc, #0000aa); }
.buy { align-items: flex-end; }
.buy .side { background: linear-gradient(#ff5050, #e43434); }
.buy .price { background: linear-gradient(#dc2a2a, #aa0000); }
.price b { font-size: 12px; font-weight: 600; }
.price em { font: 400 28px/35px "Open Sans", sans-serif; }
.price sup { font-size: 12px; font-weight: 600; align-self: flex-start; line-height: 22px; vertical-align: baseline; }
.volume { position: absolute; left: 46px; top: 0; display: flex; height: 21px; color: #000; }
.volume button { width: 20px; height: 20px; background: #ececec; border: 1px solid #b0b0b0; }
.volume input { width: 56px; height: 20px; padding: 0 4px; border: 1px solid #b0b0b0; border-width: 1px 0; font: inherit; text-align: right; }
.tooltip { position: absolute; left: 467px; top: 117px; padding: 1px 5px; border: 1px solid #a3b0b0; border-radius: 2px; background: #aebaba; color: #4c5252; box-shadow: 2px 2px 3px #1c3030; white-space: nowrap; }

.chart-tabs { display: flex; height: 24px; color: #777; border-left: 1px solid #999; }
.chart-tabs button { width: 89px; height: 19px; flex: none; background: linear-gradient(#777, #777) right 4px / 1px 12px no-repeat; }
.chart-tabs button.narrow { width: 84px; }
.chart-tabs button.m15 { width: 96px; }
.chart-tabs button.sml { width: 110px; }
.chart-tabs button.sml15 { width: 113px; }
.chart-tabs button.last { background: none; }
.chart-tabs button.current { width: 88px; color: #000; background: #fff; border: 1px solid #000; border-top: 0; }
.tab-scroll { display: flex; gap: 18px; align-items: center; height: 20px; margin: 0 12px 0 auto; opacity: .35; }

.toolbox { display: flex; flex: 1; }
.strip { display: flex; flex-direction: column; align-items: center; justify-content: space-between; width: 18px; flex: none; padding: 7px 2px 5px 0; background: #bfcddb; }
.strip span { writing-mode: vertical-rl; transform: rotate(180deg); font-size: 10px; line-height: 14px; }
.toolbox-main { display: flex; flex-direction: column; flex: 1; min-width: 0; }
.trade-area { flex: 1; background: #fff; }
.trade { width: 100%; table-layout: fixed; border-collapse: collapse; }
.w155 { width: 155px; }
.w108 { width: 108px; }
.w140 { width: 140px; }
.w120 { width: 120px; }
.trade th { height: 24px; padding: 0 5px; border-right: 1px solid #aaa; font-weight: normal; text-align: right; }
.trade th:nth-child(-n+2) { text-align: left; padding-left: 6px; }
.trade th:last-child { border: 0; }
.trade td { height: 20px; padding: 0 4px 0 21px; background: #c8c8c8; font-weight: bold; white-space: nowrap; }
.trade td:last-child { text-align: right; }
.sort { display: inline-block; margin: 0 5px 3px 10px; border-width: 0 4px 4px; }
.dot { float: left; width: 2px; height: 2px; margin: 8px 0 0 -13px; background: #000; }
.box-tabs { display: flex; height: 25px; padding-left: 5px; border-top: 1px solid #000; color: #777; }
.box-tabs > button { height: 18px; padding: 0 11px 0 10px; background: linear-gradient(#777, #777) right 4px / 1px 12px no-repeat; }
.box-tabs > .tab-on { height: 20px; padding: 0 8px; color: #000; background: #fff; margin-top: -1px; border-top: 1px solid #fff; }
.box-tabs > button:nth-last-child(2) { background: none; }
.mail small { margin: 8px 5px 0 3px; color: #f00; font-size: 9px; line-height: 9px; }
.services { display: flex; align-items: center; gap: 12px; margin-left: auto; padding-right: 8px; color: #000; }
.services button { gap: 4px; }
.services .dim { color: #b0b0b0; }

.status { display: flex; align-items: center; height: 22px; border-top: 1px solid #a0a0a0; box-shadow: inset 0 1px #fff; }
.status span { height: 19px; padding-left: 5px; border-left: 1px solid #888; line-height: 19px; white-space: nowrap; }
.status .help { flex: 1; padding-left: 2px; border: 0; }
.s-profile { width: 128px; }
.s-date { width: 98px; }
.s-val { width: 70px; }
.s-gap { width: 66px; }
.status .s-net { display: flex; align-items: center; gap: 6px; width: 121px; }

.taskbar { display: grid; grid-template-columns: 1fr auto 1fr; align-items: center; height: 48px; background: #202020; color: #fff; }
.weather { justify-self: start; gap: 8px; padding-left: 18px; }
.umbrella { position: relative; }
.umbrella b { position: absolute; right: -3px; top: -5px; width: 16px; height: 16px; border-radius: 8px; background: #c42b1c; line-height: 15px; font-weight: normal; }
.weather-text { text-align: left; }
.weather small { display: block; font-size: 11px; color: #c8c8c8; }
.apps { display: flex; align-items: center; padding-left: 2px; }
.app { position: relative; width: 40px; height: 40px; margin: 0 2px; border-radius: 4px; }
.app.active { background: #323232; }
.app.dotted::after, .app.active::after { content: ""; position: absolute; bottom: 0; left: 17px; width: 6px; height: 3px; border-radius: 2px; background: #999; }
.app.active::after { left: 12px; width: 16px; background: #4cc2ff; }
.search { display: flex; align-items: center; gap: 8px; width: 218px; height: 30px; margin: 0 2px 0 4px; padding: 0 3px 0 10px; border-radius: 15px; background: #f3f3f3; }
.search input { flex: 1; min-width: 0; border: 0; background: none; font: 13px "Open Sans", sans-serif; }
.search input::placeholder { color: #666; opacity: 1; }
.tray { display: flex; align-items: center; justify-self: end; padding-right: 13px; }
.tray button { width: 32px; height: 32px; }
.tray .sound { width: 18px; }
.tray time { width: 71px; text-align: right; }
.tray button:last-child { width: 30px; }
```
FILE: app.js
```js
// Candles every 4px from x = 146. Colour, then high, body top, body bottom, low.
const CANDLES = `
W367,367,396,396 G359,367,368,368 G367,367,368,368 G367,367,368,369 G357,367,368,368 W367,367,368,368 B367,367,372,372
W348,364,380,393 W346,357,367,371 W345,350,357,364 W341,343,353,357 W328,338,344,344 B333,338,339,345 W325,330,339,344 W325,328,332,332
B326,329,351,351 W341,343,351,355 B343,343,346,349 B342,348,368,370 B348,353,376,376 W343,360,375,375 B354,362,368,373 W348,349,368,372
B343,352,367,372 W350,352,370,374 B338,351,363,368 B354,359,368,372 B361,363,372,375 W352,357,372,381 W352,353,360,372 W343,345,353,359
B330,345,355,375 B338,352,356,385 B347,357,368,377 B368,368,414,419 W381,395,413,419 B395,395,418,424 W393,396,418,433 W333,333,398,405
W312,315,335,349 B310,315,353,362 W324,336,353,363 W320,334,337,356 B307,334,342,343 B318,342,347,351 G332,346,347,359 B337,346,355,372
W342,343,354,367 B348,348,368,382 B367,367,389,417 B380,388,416,424 W365,376,416,419 W365,375,378,393 B373,374,389,399 B377,384,386,398
B383,385,391,436 W354,373,391,396 B363,372,375,386 W351,363,375,388 B354,359,403,405 W365,367,403,405 B365,365,396,401 W378,389,396,408
B390,390,408,410 W389,395,408,424 B388,395,416,419 W396,404,416,424 W359,371,406,419 G354,371,372,382 W318,319,373,376 B319,320,346,348
B340,345,378,378 B368,376,386,401 B377,385,404,409 B382,403,407,408 B401,406,410,424 W385,386,410,410 B377,386,396,397 W389,393,395,406
B385,393,399,410 B391,402,411,426 W403,409,411,427 B396,406,410,410 W395,400,410,423 W381,399,401,408 B353,400,425,444 W399,418,425,438
B413,418,454,455 W428,431,454,459 W400,412,429,434 W394,395,413,432 B381,395,426,437 W395,411,428,431 W381,400,412,415 B396,400,416,429
W400,412,415,423 W388,397,410,410 W378,395,398,419 W353,356,396,398 B323,356,377,382 B367,376,396,398 W364,391,395,405 W374,385,392,401
W349,362,386,390 W324,325,361,366 B314,324,336,345 W280,281,335,344 B253,280,300,300 B296,299,349,353 W298,305,349,349 B291,304,310,333
W277,292,310,312 W271,286,293,310 W240,263,287,290 W237,239,264,268 B239,239,313,317 B299,312,317,339 B312,315,330,368 B328,330,358,374
W310,320,357,361 W305,312,320,355 W272,297,313,313 B293,298,346,358 B335,345,367,371 B359,367,378,412 B360,377,380,397 W367,373,380,394
B358,373,414,435 B404,412,437,471 W421,422,438,447 W368,389,421,421 W377,381,391,395 W344,365,382,382 W349,357,366,378 B341,357,366,378
W348,349,366,387 B334,351,353,373 W331,334,354,359 B332,334,352,361 W305,330,352,357 B324,331,347,353 B345,346,356,386 B348,355,370,396
B358,369,379,382 W361,361,382,391 W329,336,362,371 B333,336,354,372 B353,353,377,380 W338,341,377,378 W269,270,341,341 W206,218,270,270
B218,218,256,270 B249,255,327,330 W277,285,327,333 W252,264,285,297 B254,263,265,287 B247,263,339,346 B337,337,386,391 B385,385,415,434
W409,414,415,435 W378,392,415,419 W371,386,392,400 B372,386,394,394 B386,393,474,476 B461,473,484,498 W429,433,484,498 B410,433,457,457
B448,456,464,467 B463,463,509,509 B508,508,543,553 G526,542,543,546 W498,499,544,545 W471,487,498,500 B454,488,491,500 B489,491,555,566
B534,553,568,584 W541,543,568,591 B541,541,555,571 W513,513,554,579 W466,482,516,542 B456,482,494,499 W436,469,495,519 W438,451,471,485
B452,452,485,523 B472,485,519,528 W505,515,521,552 W443,475,514,519 B475,476,517,535 B486,514,522,524 B501,521,528,552 W456,495,525,531
W448,466,496,504 W370,391,467,472 W256,265,392,411 B238,265,271,304 W159,171,269,273 B125,171,192,217 B171,190,297,306 W210,253,297,298
B244,254,335,362 B292,334,355,360 B346,354,386,424 W272,289,385,410 B234,288,298,314 B294,298,350,383 W275,329,352,362 W249,298,330,355
B268,300,372,409 W341,354,372,397 W300,331,355,405 W316,322,332,349 W277,285,323,346 B250,286,328,355 B315,327,330,357 W294,303,330,362
W201,228,302,318 W172,178,229,233 B170,178,230,241 B224,229,254,277 B241,253,270,295 B268,269,340,348 B325,340,412,425 B390,411,452,458
W414,431,452,469 W372,379,431,448 W323,337,382,400 B314,336,339,359 W275,291,340,366 W251,253,291,296 B252,253,279,283 B270,278,318,319
B297,316,321,335 W280,281,321,341 W255,259,282,306 W223,240,260,260 W215,228,240,264 B204,228,231,236 W163,173,231,245 B164,174,203,206
B189,202,217,225 B208,216,256,261 W211,211,257,257 B207,209,279,288 B270,278,289,296 W266,286,289,293 W241,248,287,301 B247,248,269,282
B253,268,326,331 W291,298,326,335 W269,271,301,302 G263,271,272,282 B246,272,290,293 W266,272,290,295 W245,260,274,275 W206,217,261,261
W183,187,218,224 B183,186,193,216 B182,190,212,217 W172,175,205,209 W152,157,175,175 B150,157,193,195 B170,192,196,206 B183,194,230,246
W197,227,229,237 B216,229,272,274 W208,216,273,273 B195,215,218,221 W185,194,218,218 W147,150,196,216 W125,136,151,171 W126,131,138,164
B131,131,197,197 W167,175,197,197 W149,151,176,177 B150,150,172,172 B173,173,193,198 B187,192,224,227 B216,223,245,248 W189,191,245,248
B185,189,193,212 W165,167,193,199 B167,167,174,180 W169,169,174,176 B201,202,210,210 W194,210,217,217 W191,194,211,211 W183,192,195,195
B192,192,195,195 B194,194,198,203 W190,190,198,198 W185,185,187,191 B184,185,187,187 W185,185,187,187 B185,185,187,191 W183,185,187,187
B177,185,188,190 B187,187,192,193 W187,188,193,193 B183,188,190,198 B188,188,212,214 W203,203,210,212 W196,202,204,207 W183,194,203,205
B187,195,198,198 B195,197,200,203 B199,199,219,219 B216,217,236,245 W196,223,235,235 W207,210,222,223 B203,210,216,221 W206,211,215,223`.trim().split(/\s+/);

const COLORS = { W: '#fff', B: '#0000c8', G: '#0f0' };
const parts = [];
const rect = (x, y, w, h, fill) => parts.push(`<rect x="${x}" y="${y}" width="${w}" height="${h}" fill="${fill}"/>`);
const text = (x, y, s, cls = '', anchor = 'start') => parts.push(`<text x="${x}" y="${y}" class="${cls}" text-anchor="${anchor}">${s}</text>`);

rect(143, 346, 1, 50, COLORS.B);
CANDLES.forEach((item, i) => {
  const [high, top, bottom, low] = item.slice(1).split(',').map(Number);
  const x = 146 + i * 4;
  const color = COLORS[item[0]];
  rect(x, high, 1, low - high, color);
  rect(x - 1, top, x > 1384 ? 2 : 3, bottom - top, color);
});

// Plot frame, period separator, vertical line and shift markers
parts.push('<path d="M142.500 600V105.500H1387.500V600.500H142" fill="none" stroke="#fff"/>');
parts.push('<path d="M1278.500 106V600" stroke="#fff" stroke-dasharray="3 3"/>');
parts.push('<path d="M602.500 106V600" stroke="#000" stroke-dasharray="3 3"/>');
parts.push('<path d="M1142 106h9l-4 5h-1zM714 600h9l-4-5h-1z" fill="#778899"/>');

// Price axis
for (let i = 0; i < 14; i++) {
  const y = 138 + i * 33;
  rect(1388, y, 4, 1, '#fff');
  if (i !== 1) text(1393, y + 4, (1.2898 - i * 0.0004).toFixed(5));
}

// Time axis
const times = ['29 Jun 2022', '29 Jun 01:40', '29 Jun 03:00', '29 Jun 04:20', '29 Jun 05:40', '29 Jun 07:00', '29 Jun 08', '', '29 Jun 11:00', '29 Jun 12:20', '29 Jun 13:40', '29 Jun 15:00', '29 Jun 16:20', '29 Jun 17:40', '29 Jun 19:00', '29 Jun 20:20', '29 Jun 21:40', '29 Jun 23:00', '30 Jun 00:20', '30 Jun 01:40'];
times.forEach((label, i) => {
  rect(142 + i * 64, 601, 1, 4, '#fff');
  text(142 + i * 64, 613, label);
});
rect(563, 605, 78, 11, '#000');
text(602, 613, '2022.06.29 09:55', 'dark', 'middle');

// Level numbers along the vertical line
[['0.0', 234], ['3', 366], ['4', 399], ['5', 432], ['6', 465], ['7', 498], ['8', 531], ['9', 564], ['10', 597]]
  .forEach(([label, y]) => text(601, y, label, 'level', 'end'));

// Horizontal price line
rect(143, 170, 1, 5, '#f00');
rect(335, 171, 1048, 2, '#f00');
rect(1380, 169, 7, 7, '#f00');
rect(1381, 170, 5, 5, '#fff');
rect(1390, 167, 39, 11, '#f00');
text(1393, 176, '1.28939', 'onred');
document.getElementById('plot').innerHTML = parts.join('');

// Navigator tree
const USER = '<svg class="pic" width="13" height="15" viewBox="0 0 13 15" fill="#d4f9d8" stroke="#00a818"><circle cx="6.500" cy="4" r="3"/><path d="M1 14v-2q0-3 3-3h5q3 0 3 3v2z"/></svg>';
const SERVER = '<svg class="pic" width="14" height="11" viewBox="0 0 14 11" fill="#d4f9d8" stroke="#00a818"><rect x=".5" y=".5" width="13" height="4"/><path d="M2 2.500h2M7 5v3M0 8.500h14"/><circle cx="7" cy="8.500" r="1.500"/></svg>';
const OPEN = '<svg class="chev" width="11" height="8" viewBox="0 0 11 8" fill="none" stroke="#222" stroke-width="1.500"><path d="M1 1.500l4.500 4.500L10 1.500"/></svg>';
const SHUT = '<svg class="chev" width="11" height="10" viewBox="0 0 11 10" fill="none" stroke="#888" stroke-width="1.500"><path d="M3.500 1l4 4-4 4"/></svg>';
const FUNC = '<svg class="pic" width="17" height="14" viewBox="0 0 17 14" fill="none"><path d="M1 12c4 0 3-9 6-9s2 7 4 7 2-8 4-9" stroke="#0b62a8"/><path d="M2 8l4-2 4 3 6-6" stroke="#00a818"/></svg>';
const HAT = '<svg class="pic" width="17" height="14" viewBox="0 0 17 14" fill="#9ad4f8" stroke="#0b62a8"><path d="M4 6v5q4 3 8 0V6z"/><path d="M1 5l8-4 7 3-7 4z"/><path d="M2 5v7" stroke-width="2"/></svg>';
const SCROLL = '<svg class="pic" width="17" height="14" viewBox="0 0 17 14" fill="#ffc800" stroke="#c18a10"><path d="M5 1.500h8v9H5z"/><path d="M3 9.500h8v3H4q-2-1-1-3z"/></svg>';
const rows = [
  [3, USER, '3007512'], [3, USER, '3007734'],
  [2, OPEN + SERVER, 'OANDA-Demo'], [3, USER, '1600012'],
  [2, OPEN + SERVER, 'FivePercent'], [3, USER, '2562154'],
  [2, OPEN + SERVER, 'OANDA_Global', 'bold'], [3, USER, '9616831', 'bold'],
  [1, SHUT + FUNC, 'Indicators'], [1, SHUT + HAT, 'Expert Advisors'], [1, SHUT + SCROLL, 'Scripts'],
];
document.getElementById('tree').insertAdjacentHTML('beforeend',
  rows.map(([lv, pic, label, cls = '']) => `<div class="node lv${lv} ${cls}">${pic}<span>${label}</span></div>`).join(''));
```
